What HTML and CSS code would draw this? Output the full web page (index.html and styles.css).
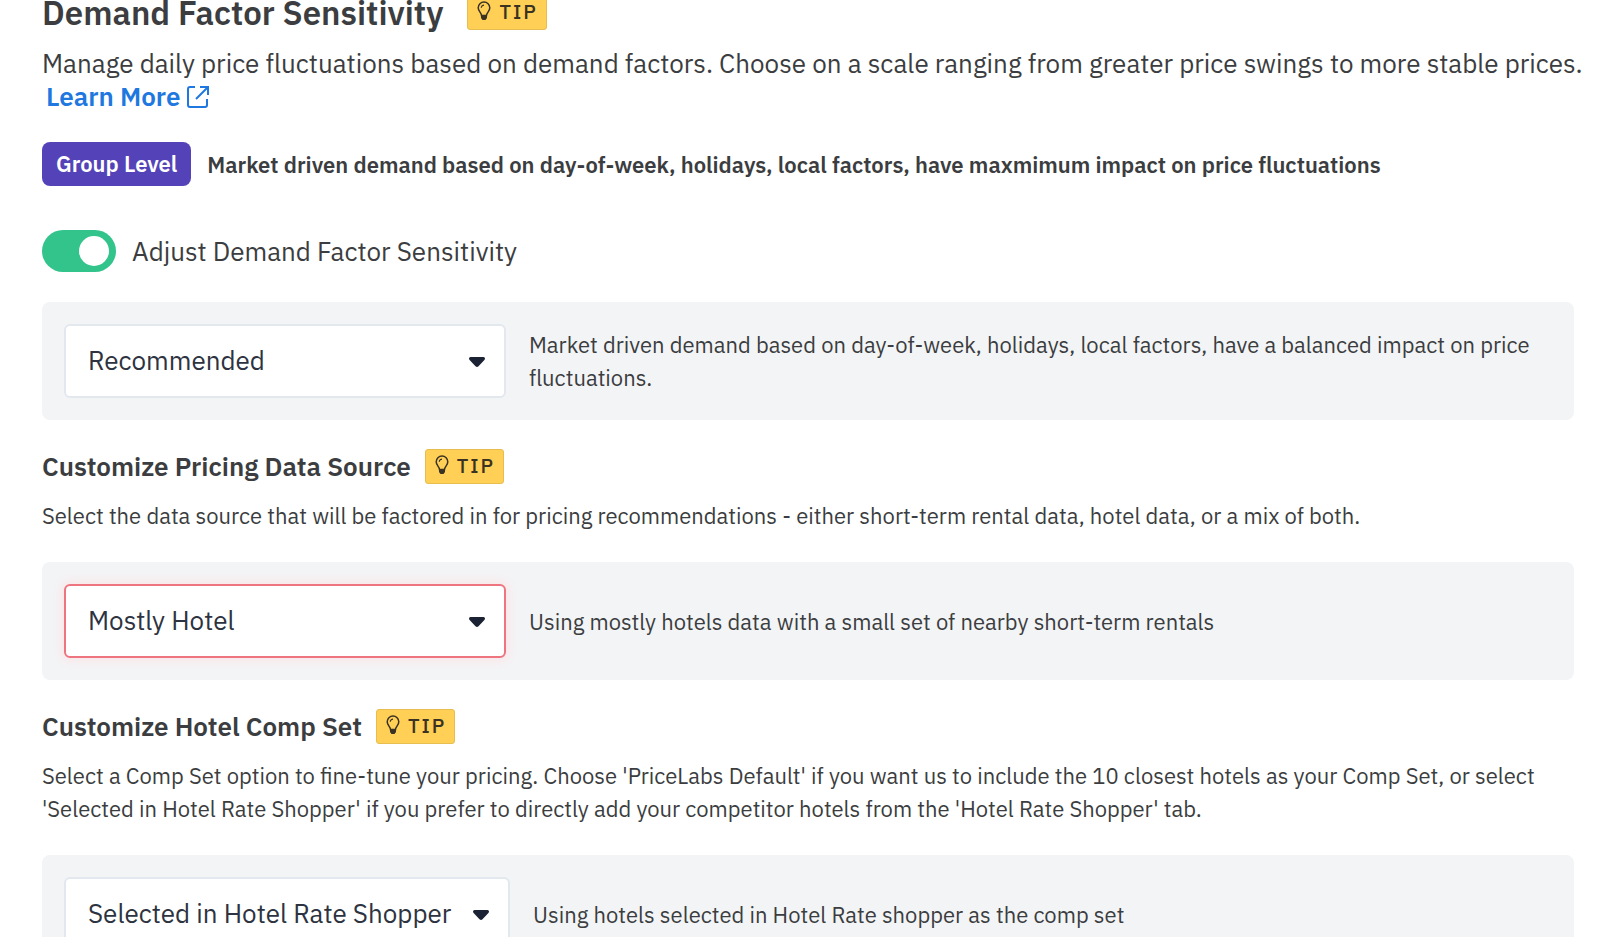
FILE: index.html
```html
<!DOCTYPE html>
<html lang="en">
<head>
    <title>Demand Factor Sensitivity</title>
    <meta charset="utf-8">
    <meta name="viewport" content="width=device-width, initial-scale=1">
    <link rel="stylesheet" href="styles.css">
</head>
<body>
    <svg class="sprite" aria-hidden="true">
        <symbol id="bulb" viewBox="0 0 14 20">
            <path d="M4.5 14.5C4.5 11.5 1.2 10.5 1.2 6.8a5.8 5.8 0 0 1 11.6 0C12.8 10.5 9.5 11.5 9.5 14.5z" fill="none" stroke="currentColor" stroke-width="1.5"/>
            <path d="M4.3 6.8A2.7 2.7 0 0 1 7 4.1" fill="none" stroke="currentColor" stroke-width="1.2"/>
            <path d="M4 14.5h6v2.5L8.5 19h-3L4 17z" fill="currentColor"/>
        </symbol>
        <symbol id="caret" viewBox="0 0 16 10">
            <path d="M1.5 0h13q1.5 0 1.5 1.5 0 .8-.6 1.4L9.5 9.2q-1.5 1.5-3 0L.6 2.9Q0 2.3 0 1.5 0 0 1.5 0z" fill="currentColor"/>
        </symbol>
    </svg>
    <main class="wrapper">
        <section class="section">
            <div class="heading">
                <h1 class="title">Demand Factor Sensitivity</h1>
                <button class="tip" type="button"><svg class="tip-icon"><use href="#bulb"/></svg>TIP</button>
            </div>
            <p class="lead">Manage daily price fluctuations based on demand factors. Choose on a scale ranging from greater price swings to more stable prices.
                <a class="learn" href="#">Learn More<svg class="learn-icon" viewBox="0 0 24 24" fill="none" stroke="currentColor" stroke-width="2"><path d="M9 2H4a2 2 0 0 0-2 2v16a2 2 0 0 0 2 2h15a2 2 0 0 0 2-2v-6M14 2h8v8M22 2L10 14"/></svg></a>
            </p>
            <div class="level">
                <span class="badge">Group Level</span>
                <span class="level-text">Market driven demand based on day-of-week, holidays, local factors, have maxmimum impact on price fluctuations</span>
            </div>
            <div class="switch">
                <input class="toggle" id="adjust" type="checkbox" role="switch" checked>
                <label for="adjust">Adjust Demand Factor Sensitivity</label>
            </div>
            <div class="panel">
                <div class="dropdown">
                    <select class="select" aria-label="Demand factor sensitivity">
                        <option>Recommended</option>
                    </select>
                    <svg class="caret"><use href="#caret"/></svg>
                </div>
                <p class="note">Market driven demand based on day-of-week, holidays, local factors, have a balanced impact on price fluctuations.</p>
            </div>
        </section>
        <section class="section">
            <div class="heading">
                <h2 class="subtitle">Customize Pricing Data Source</h2>
                <button class="tip" type="button"><svg class="tip-icon"><use href="#bulb"/></svg>TIP</button>
            </div>
            <p class="description">Select the data source that will be factored in for pricing recommendations - either short-term rental data, hotel data, or a mix of both.</p>
            <div class="panel">
                <div class="dropdown">
                    <select class="select select-error" aria-label="Pricing data source">
                        <option>Mostly Hotel</option>
                    </select>
                    <svg class="caret"><use href="#caret"/></svg>
                </div>
                <p class="note">Using mostly hotels data with a small set of nearby short-term rentals</p>
            </div>
        </section>
        <section class="section">
            <div class="heading">
                <h2 class="subtitle">Customize Hotel Comp Set</h2>
                <button class="tip" type="button"><svg class="tip-icon"><use href="#bulb"/></svg>TIP</button>
            </div>
            <p class="description">Select a Comp Set option to fine-tune your pricing. Choose 'PriceLabs Default' if you want us to include the 10 closest hotels as your Comp Set, or select 'Selected in Hotel Rate Shopper' if you prefer to directly add your competitor hotels from the 'Hotel Rate Shopper' tab.</p>
            <div class="panel">
                <div class="dropdown">
                    <select class="select select-wide" aria-label="Hotel comp set">
                        <option>Selected in Hotel Rate Shopper</option>
                    </select>
                    <svg class="caret"><use href="#caret"/></svg>
                </div>
                <p class="note">Using hotels selected in Hotel Rate shopper as the comp set</p>
            </div>
        </section>
    </main>
</body>
</html>
```
FILE: styles.css
```css
*{
    box-sizing: border-box;
    margin: 0;
    padding: 0;
}
body{
    background-color: #ffffff;
    color: #3b3d40;
    font-family: 'IBM Plex Sans', Roboto, sans-serif;
    font-size: 22px;
    line-height: 33px;
}
body::-webkit-scrollbar{
    display: none;
}
.sprite{
    display: none;
}
.wrapper{
    margin-top: -6px;
    padding: 0 26px 0 42px;
}
.section{
    margin-bottom: 28px;
}
.heading{
    display: flex;
    align-items: center;
    gap: 14px;
    height: 36px;
    margin-bottom: 15px;
}
.title{
    font-size: 33px;
    font-weight: 600;
    margin-right: 10px;
}
.subtitle{
    font-size: 26px;
    font-weight: 600;
}
.tip{
    display: flex;
    align-items: center;
    gap: 8px;
    height: 35px;
    padding: 0 8px 2px 9px;
    border: 1px solid #e6bd4e;
    border-radius: 3px;
    background-color: #ffcf56;
    color: #3a3222;
    font-family: inherit;
    font-size: 20px;
    font-weight: 500;
    letter-spacing: 2px;
}
.tip-icon{
    width: 14px;
    height: 20px;
}
.lead{
    margin: 17px -14px 0 0;
    font-size: 26px;
}
.learn{
    display: inline-flex;
    align-items: center;
    gap: 6px;
    margin-left: 4px;
    color: #1f78e0;
    font-weight: 600;
    text-decoration: none;
}
.learn-icon{
    width: 24px;
    height: 24px;
}
.level{
    display: flex;
    align-items: center;
    gap: 16px;
    margin-top: 29px;
    font-weight: 600;
}
.badge{
    padding: 5px 14px;
    height: 44px;
    border-radius: 8px;
    background-color: #5443b8;
    color: #ffffff;
    white-space: nowrap;
}
.switch{
    display: flex;
    align-items: center;
    gap: 16px;
    margin: 44px 0 30px;
    font-size: 26px;
}
.toggle{
    appearance: none;
    display: flex;
    align-items: center;
    justify-content: flex-end;
    width: 74px;
    height: 42px;
    padding: 7px;
    border-radius: 21px;
    background-color: #33c48c;
}
.toggle::before{
    content: "";
    width: 30px;
    height: 30px;
    border-radius: 50%;
    background-color: #ffffff;
}
.toggle:not(:checked){
    justify-content: flex-start;
    background-color: #c4c8ce;
}
.panel{
    display: flex;
    align-items: center;
    gap: 23px;
    min-height: 118px;
    padding: 22px;
    border-radius: 8px;
    background-color: #f3f4f6;
}
.dropdown{
    position: relative;
    flex: none;
}
.select{
    appearance: none;
    display: block;
    width: 442px;
    height: 74px;
    padding: 0 48px 2px 22px;
    border: 2px solid #e3e8ef;
    border-radius: 6px;
    background-color: #ffffff;
    color: #2d3340;
    font-family: inherit;
    font-size: 26px;
}
.select-error{
    border-color: #ee7480;
    box-shadow: 0 0 10px 3px #fbe6e8;
}
.select-wide{
    width: 446px;
}
.caret{
    position: absolute;
    top: 33px;
    right: 21px;
    width: 16px;
    height: 10px;
    color: #1b2233;
    pointer-events: none;
}
.description{
    margin-bottom: 30px;
}
```
